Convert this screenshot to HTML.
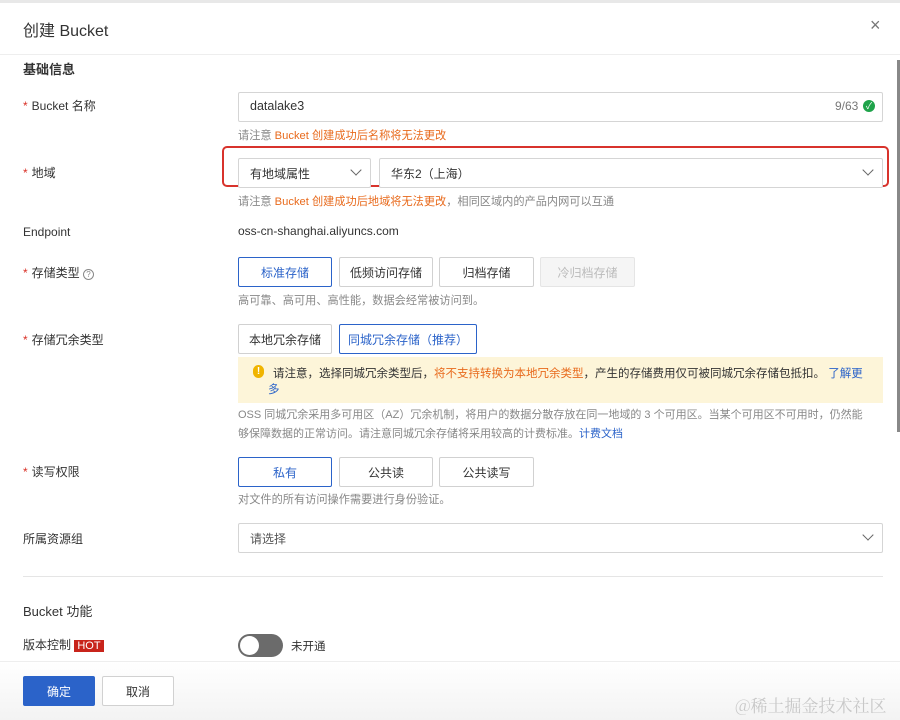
<!DOCTYPE html>
<html><head><meta charset="utf-8"><style>
*{box-sizing:border-box;margin:0;padding:0}
body{width:900px;height:720px;position:relative;background:#fff;font-family:"Liberation Sans","Noto Sans CJK SC",sans-serif;font-size:12px;color:#333;overflow:hidden}
.a{position:absolute;white-space:nowrap}
.lbl{left:23px;font-size:12px;color:#333}
.lbl i{color:#d93026;font-style:normal;margin-right:4px}
.box{position:absolute;border:1px solid #d5d5d5;background:#fff;border-radius:2px}
.btn{position:absolute;border:1px solid #d1d1d1;background:#fff;border-radius:2px;font-size:12px;color:#333;display:flex;align-items:center;justify-content:center}
.sel{border-color:#2b63c9;color:#2b63c9}
.hint{color:#888;font-size:11.2px}
.or{color:#e86a1c}
.chev{position:absolute;width:8px;height:8px;border-right:1.3px solid #666;border-bottom:1.3px solid #666;transform:rotate(45deg)}
</style></head><body>
<div class="a" style="left:0;top:0;width:900px;height:3px;background:#e8e8e8"></div>
<div class="a" style="left:23px;top:17px;font-size:16px;color:#333">创建 Bucket</div>
<div class="a" style="left:870px;top:15px;font-size:18px;color:#777">×</div>
<div class="a" style="left:0;top:54px;width:900px;height:1px;background:#eee"></div>
<div class="a" style="left:897px;top:60px;width:3px;height:372px;background:#888"></div>

<div class="a" style="left:23px;top:59px;font-size:13px;font-weight:bold">基础信息</div>

<div class="a lbl" style="top:97px"><i>*</i>Bucket 名称</div>
<div class="box" style="left:238px;top:92px;width:645px;height:30px"></div>
<div class="a" style="left:250px;top:99px;font-size:12.5px">datalake3</div>
<div class="a" style="left:835px;top:99px;color:#777">9/63</div>
<div class="a" style="left:863px;top:100px;width:12px;height:12px;border-radius:50%;background:#1fa34a;color:#fff;font-size:9px;line-height:12px;text-align:center">✓</div>
<div class="a hint" style="left:238px;top:127px">请注意 <span class="or">Bucket 创建成功后名称将无法更改</span></div>

<div class="a lbl" style="top:164px"><i>*</i>地域</div>
<div class="a" style="left:222px;top:146px;width:667px;height:41px;border:2px solid #d8332c;border-radius:5px"></div>
<div class="box" style="left:238px;top:158px;width:133px;height:30px"></div>
<div class="a" style="left:250px;top:165px">有地域属性</div>
<div class="chev" style="left:352px;top:166px"></div>
<div class="box" style="left:379px;top:158px;width:504px;height:30px"></div>
<div class="a" style="left:391px;top:165px">华东2（上海）</div>
<div class="chev" style="left:864px;top:166px"></div>
<div class="a hint" style="left:238px;top:193px">请注意 <span class="or">Bucket 创建成功后地域将无法更改</span>，相同区域内的产品内网可以互通</div>

<div class="a lbl" style="top:225px">Endpoint</div>
<div class="a" style="left:238px;top:224px">oss-cn-shanghai.aliyuncs.com</div>

<div class="a lbl" style="top:264px"><i>*</i>存储类型 <span style="display:inline-block;width:11px;height:11px;border:1px solid #888;border-radius:50%;font-size:8px;line-height:9px;text-align:center;color:#888">?</span></div>
<div class="btn sel" style="left:238px;top:257px;width:94px;height:30px">标准存储</div>
<div class="btn" style="left:339px;top:257px;width:94px;height:30px">低频访问存储</div>
<div class="btn" style="left:439px;top:257px;width:95px;height:30px">归档存储</div>
<div class="btn" style="left:540px;top:257px;width:95px;height:30px;background:#f5f5f5;border-color:#e5e5e5;color:#bbb">冷归档存储</div>
<div class="a hint" style="left:238px;top:292px">高可靠、高可用、高性能，数据会经常被访问到。</div>

<div class="a lbl" style="top:331px"><i>*</i>存储冗余类型</div>
<div class="btn" style="left:238px;top:324px;width:94px;height:30px">本地冗余存储</div>
<div class="btn sel" style="left:339px;top:324px;width:138px;height:30px">同城冗余存储（推荐）</div>
<div class="a" style="left:238px;top:357px;width:645px;height:46px;background:#fdf5d9"></div>
<div class="a" style="left:253px;top:365px;width:11px;height:13px;border-radius:6px;background:#f0b400;color:#fff;font-size:10px;font-weight:bold;text-align:center;line-height:13px">!</div>
<div class="a" style="left:273px;top:365px;color:#333;font-size:11.5px">请注意，选择同城冗余类型后，<span class="or">将不支持转换为本地冗余类型</span>，产生的存储费用仅可被同城冗余存储包抵扣。 <span style="color:#2b63c9">了解更</span></div>
<div class="a" style="left:268px;top:381px;color:#2b63c9;font-size:11.5px">多</div>
<div class="a hint" style="left:238px;top:406px;font-size:11px">OSS 同城冗余采用多可用区（AZ）冗余机制，将用户的数据分散存放在同一地域的 3 个可用区。当某个可用区不可用时，仍然能</div>
<div class="a hint" style="left:238px;top:425px;font-size:11px">够保障数据的正常访问。请注意同城冗余存储将采用较高的计费标准。<span style="color:#2b63c9">计费文档</span></div>

<div class="a lbl" style="top:463px"><i>*</i>读写权限</div>
<div class="btn sel" style="left:238px;top:457px;width:94px;height:30px">私有</div>
<div class="btn" style="left:339px;top:457px;width:94px;height:30px">公共读</div>
<div class="btn" style="left:439px;top:457px;width:95px;height:30px">公共读写</div>
<div class="a hint" style="left:238px;top:491px">对文件的所有访问操作需要进行身份验证。</div>

<div class="a lbl" style="top:530px">所属资源组</div>
<div class="box" style="left:238px;top:523px;width:645px;height:30px"></div>
<div class="a" style="left:250px;top:530px;color:#555">请选择</div>
<div class="chev" style="left:864px;top:531px"></div>

<div class="a" style="left:23px;top:576px;width:860px;height:1px;background:#e5e5e5"></div>
<div class="a" style="left:23px;top:601px;font-size:13px">Bucket 功能</div>
<div class="a lbl" style="top:636px">版本控制 <span style="background:#c8241b;color:#fff;padding:0 3px;font-size:11px">HOT</span></div>
<div class="a" style="left:238px;top:634px;width:45px;height:23px;border-radius:12px;background:#6b6b6b"></div>
<div class="a" style="left:240px;top:636px;width:19px;height:19px;border-radius:50%;background:#fff"></div>
<div class="a" style="left:291px;top:638px;font-size:11.5px">未开通</div>

<div class="a" style="left:0;top:661px;width:900px;height:59px;background:linear-gradient(#fff,#f3f3f3);border-top:1px solid #eee"></div>
<div class="btn" style="left:23px;top:676px;width:72px;height:30px;background:#2b63c9;border-color:#2b63c9;color:#fff">确定</div>
<div class="btn" style="left:102px;top:676px;width:72px;height:30px">取消</div>
<div class="a" style="left:735px;top:692px;font-size:17px;color:#c8c8c8;font-family:'Noto Serif CJK SC',serif">@稀土掘金技术社区</div>
</body></html>
